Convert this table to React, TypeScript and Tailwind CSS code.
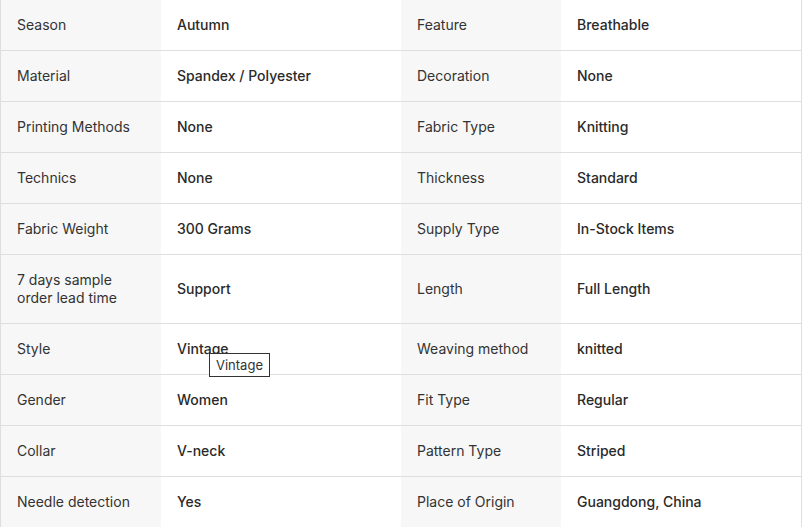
const rows: [string, string, string, string][] = [
  ["Season", "Autumn", "Feature", "Breathable"],
  ["Material", "Spandex / Polyester", "Decoration", "None"],
  ["Printing Methods", "None", "Fabric Type", "Knitting"],
  ["Technics", "None", "Thickness", "Standard"],
  ["Fabric Weight", "300 Grams", "Supply Type", "In-Stock Items"],
  ["7 days sample order lead time", "Support", "Length", "Full Length"],
  ["Style", "Vintage", "Weaving method", "knitted"],
  ["Gender", "Women", "Fit Type", "Regular"],
  ["Collar", "V-neck", "Pattern Type", "Striped"],
  ["Needle detection", "Yes", "Place of Origin", "Guangdong, China"],
];

const Label = ({ text }: { text: string }) => (
  <div className="bg-[#f7f7f7] px-4 py-4 flex items-center text-[#333] text-[14px] leading-[18px]">
    <span className="max-w-[122px]">{text}</span>
  </div>
);

const Value = ({ text, tip }: { text: string; tip?: boolean }) => (
  <div className="relative bg-white px-4 py-4 flex items-center text-[#2a2a2a] font-medium text-[14px] leading-[18px]">
    <span>{text}</span>
    {tip && (
      <div className="absolute left-[48px] top-[29px] z-10 border border-[#333] bg-white px-[6px] py-[3px] text-[13px] leading-[16px] font-normal text-[#333]">
        {text}
      </div>
    )}
  </div>
);

export default function App() {
  return (
    <div className="w-[802px] h-[527px] overflow-hidden bg-white font-['Inter','Liberation_Sans',sans-serif]">
      <div className="border-l border-r border-[#dedede]">
        {rows.map((r, i) => (
          <div
            key={i}
            className="grid grid-cols-[160px_240px_160px_1fr] border-b border-[#dedede]"
          >
            <Label text={r[0]} />
            <Value text={r[1]} tip={r[1] === "Vintage"} />
            <Label text={r[2]} />
            <Value text={r[3]} />
          </div>
        ))}
      </div>
    </div>
  );
}
